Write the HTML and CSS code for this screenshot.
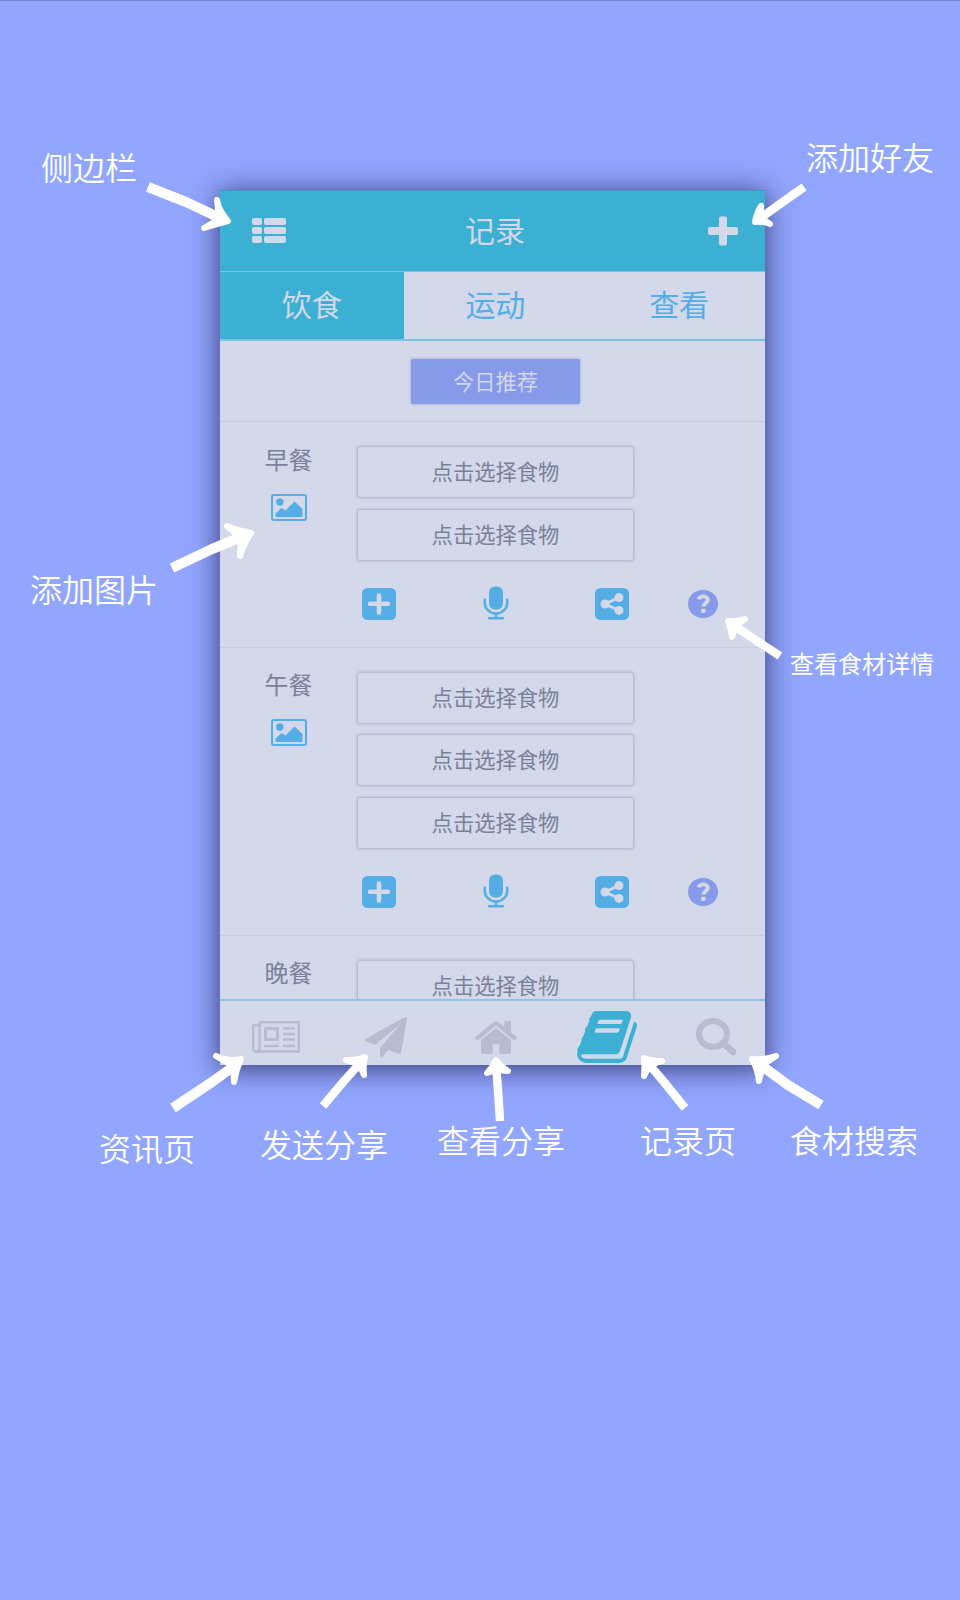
FILE: index.html
```html
<!DOCTYPE html>
<html lang="zh-CN">
<head>
<meta charset="utf-8">
<title>记录</title>
<link rel="stylesheet" href="styles.css">
</head>
<body>
<svg class="defs" width="0" height="0">
  <symbol id="picture" viewBox="0 0 36 27"><rect x="1" y="1" width="34" height="25" rx="2" fill="none" stroke="currentColor" stroke-width="2"/><circle cx="8.800" cy="8" r="3.700"/><path d="M5 22.500v-3l5.500-5 4 2.500 9-9 7.500 7v7.500z" stroke="currentColor" stroke-linejoin="round"/></symbol>
  <symbol id="plus-square" viewBox="0 0 34 32"><rect width="34" height="32" rx="5.500"/><path class="cut" d="M17 7.500v17M8 15.800h18" stroke-width="4.600" stroke-linecap="round"/></symbol>
  <symbol id="mic" viewBox="0 0 26 34"><rect x="6" y="0.500" width="14" height="23" rx="6"/><path d="M1.800 13.500v3.500a11.200 10.500 0 0 0 22.400 0v-3.500M13 27.500v4.500M6 32.200h14" fill="none" stroke="currentColor" stroke-width="2.400" stroke-linecap="round"/></symbol>
  <symbol id="share" viewBox="0 0 34 32"><rect width="34" height="32" rx="5.500"/><path class="cut" d="M24 9.500L10 16l14 6.500" stroke-width="3"/><g class="cut-fill"><circle cx="10" cy="16" r="4.500"/><circle cx="24" cy="9.600" r="4.500"/><circle cx="24" cy="22.400" r="4.500"/></g></symbol>
  <symbol id="question" viewBox="0 0 30 28"><ellipse cx="15" cy="14" rx="15" ry="14"/><path class="cut" d="M10.300 9.300c1.200-2 2.800-2.900 4.900-2.900 2.700 0 4.700 1.500 4.700 3.700 0 3.100-4.600 3-4.600 6.600" stroke-width="3.900"/><rect class="cut-fill" x="13.100" y="18.700" width="4.400" height="4.200" rx="0.800"/></symbol>
</svg>
<main class="guide">
  <section class="phone">
    <div class="screen">
      <header class="header">
        <svg class="icon-list" viewBox="0 0 34 25"><rect width="10" height="7" rx="2"/><rect x="12" width="22" height="7" rx="2"/><rect y="9" width="10" height="7" rx="2"/><rect x="12" y="9" width="22" height="7" rx="2"/><rect y="18" width="10" height="7" rx="2"/><rect x="12" y="18" width="22" height="7" rx="2"/></svg>
        <h1 class="title">记录</h1>
        <svg class="icon-add" viewBox="0 0 30 30"><rect x="11" y="0.500" width="8" height="29" rx="2"/><rect x="0" y="11" width="30" height="8" rx="2"/></svg>
      </header>
      <nav class="tabs">
        <a class="tab active">饮食</a><a class="tab">运动</a><a class="tab">查看</a>
      </nav>
      <div class="content">
        <div class="recommend"><button class="today">今日推荐</button></div>
        <section class="meal">
          <div class="meal-name"><span>早餐</span><svg class="picture"><use href="#picture"/></svg></div>
          <div class="fields"><div class="field">点击选择食物</div><div class="field">点击选择食物</div></div>
          <div class="actions"><svg class="square"><use href="#plus-square"/></svg><svg class="mic"><use href="#mic"/></svg><svg class="square"><use href="#share"/></svg></div>
          <div class="help"><svg><use href="#question"/></svg></div>
        </section>
        <section class="meal">
          <div class="meal-name"><span>午餐</span><svg class="picture"><use href="#picture"/></svg></div>
          <div class="fields"><div class="field">点击选择食物</div><div class="field">点击选择食物</div><div class="field">点击选择食物</div></div>
          <div class="actions"><svg class="square"><use href="#plus-square"/></svg><svg class="mic"><use href="#mic"/></svg><svg class="square"><use href="#share"/></svg></div>
          <div class="help"><svg><use href="#question"/></svg></div>
        </section>
        <section class="meal">
          <div class="meal-name"><span>晚餐</span></div>
          <div class="fields"><div class="field">点击选择食物</div></div>
        </section>
      </div>
      <nav class="bottom">
        <a><svg width="48" height="32" viewBox="0 0 48 32" fill="none" stroke="currentColor" stroke-width="2.400"><path d="M7.500 1.200H46.800V30.500H4q-2.800 0-2.800-2.500V4.500h6.300M7.500 1.200V28q0 2.500-2.500 2.500"/><rect x="13.500" y="7.500" width="12" height="11" stroke-width="3"/><path d="M31 7.500h12M31 13h12M31 18.500h12M12 25h14.500M31 25h12"/></svg></a>
        <a><svg width="42" height="40" viewBox="0 0 1792 1792" preserveAspectRatio="none"><path d="M1764 11q33 24 27 64l-256 1536q-5 29-32 45-14 8-31 8-11 0-24-5l-453-185-242 295q-18 23-49 23-13 0-22-4-19-7-30.500-23.500t-11.500-36.500v-349l864-1059-1069 925-395-162q-37-14-40-55-2-40 32-59l1664-960q15-9 32-9 20 0 36 11z"/></svg></a>
        <a><svg width="42" height="33" viewBox="89 253 1614 1283" preserveAspectRatio="none"><path d="M1472 992v480q0 26-19 45t-45 19h-384v-384h-256v384h-384q-26 0-45-19t-19-45v-480q0-1 .5-3t.5-3l575-474 575 474q1 2 1 6zm223-69l-62 74q-8 9-21 11h-3q-13 0-21-7l-692-577-692 577q-12 8-24 7-13-2-21-11l-62-74q-8-10-7-23.500t11-21.500l719-599q32-26 76-26t76 26l244 204v-195q0-14 9-23t23-9h192q14 0 23 9t9 23v408l219 182q10 8 11 21.500t-7 23.500z"/></svg></a>
        <a class="current"><svg width="60" height="52" viewBox="62 128 1670 1536" preserveAspectRatio="none"><path d="M1703 478q40 57 18 129l-275 906q-19 64-76.500 107.500t-122.500 43.500h-923q-77 0-148.500-53.500t-99.500-131.500q-24-67-2-127 0-4 3-27t4-37q1-8-3-21.500t-3-19.500q2-11 8-21t16.500-23.500 16.500-23.500q23-38 45-91.500t30-91.500q3-10 .5-30t-.5-28q3-11 17-28t17-23q21-36 42-92t25-90q1-9-2.500-32t.5-28q4-13 22-30.500t22-22.500q19-26 42.500-84.500t27.500-96.500q1-8-3-25.500t-2-26.500q2-8 9-18t18-23 17-21q8-12 16.500-30.500t15-35 16-36 19.500-32 26.500-23.500 36-11.500 47.500 5.500l-1 3q38-9 51-9h761q74 0 114 56t18 130l-274 906q-36 119-71.500 153.500t-128.500 34.500h-869q-27 0-38 15-11 16-1 43 24 70 144 70h923q29 0 56-15.500t35-41.500l300-987q7-22 5-57 38 15 59 43zm-1064 2q-4 13 2 22.500t20 9.500h608q13 0 25.500-9.500t16.500-22.500l21-64q4-13-2-22.500t-20-9.500h-608q-13 0-25.500 9.500t-16.500 22.500zm-83 256q-4 13 2 22.500t20 9.500h608q13 0 25.500-9.500t16.500-22.500l21-64q4-13-2-22.500t-20-9.500h-608q-13 0-25.500 9.500t-16.500 22.500z"/></svg></a>
        <a><svg width="41" height="38" viewBox="0 0 41 38" fill="none" stroke="currentColor"><ellipse cx="17" cy="16" rx="14" ry="13" stroke-width="6"/><path d="M27 25l10 9" stroke-width="6.500" stroke-linecap="round"/></svg></a>
      </nav>
    </div>
  </section>

  <svg class="arrows" viewBox="0 0 960 1600">
    <g class="wide">
      <path d="M148 187L186 202 222 219"/>
      <path d="M172 568L212 549 244 536"/>
      <path d="M173 1108L212 1082 237 1064"/>
      <path d="M821 1105L788 1085 758 1063"/>
    </g>
    <g class="narrow">
      <path d="M804 187L780 204 758 220"/>
      <path d="M780 656L757 641 733 625"/>
      <path d="M323 1106L344 1081 362 1061"/>
      <path d="M500 1121L498 1090 496 1065"/>
      <path d="M685 1108L664 1082 647 1062"/>
    </g>
    <g class="heads">
      <path d="M217 200Q219 211 228 221 216 224 204 228L219 219Z"/>
      <path d="M761 206Q756 214 755 222 764 221 770 224L761 218Z"/>
      <path d="M227 526Q239 531 251 533 243 545 240 556L241 538Z"/>
      <path d="M745 619Q736 622 728 621 731 629 732 637L736 626Z"/>
      <path d="M216 1056Q227 1062 241 1059 236 1070 234 1082L233 1066Z"/>
      <path d="M346 1060Q356 1061 365 1057 363 1067 364 1075L359 1064Z"/>
      <path d="M487 1073Q493 1067 496 1060 501 1067 508 1071L496 1070Z"/>
      <path d="M662 1061Q652 1061 644 1058 645 1067 644 1076L650 1065Z"/>
      <path d="M776 1056Q764 1060 752 1059 758 1070 759 1081L763 1065Z"/>
    </g>
  </svg>
  <span class="label sidebar">侧边栏</span>
  <span class="label friend">添加好友</span>
  <span class="label photo">添加图片</span>
  <span class="label detail">查看食材详情</span>
  <span class="label news">资讯页</span>
  <span class="label send">发送分享</span>
  <span class="label view">查看分享</span>
  <span class="label record">记录页</span>
  <span class="label search">食材搜索</span>
</main>
</body>
</html>
```
FILE: styles.css
```css
* { box-sizing: border-box; }
body { margin: 0; background: #92a6ff; font-family: "Noto Sans CJK SC", sans-serif; }
.defs { position: absolute; }
.guide { position: relative; height: 1600px; padding: 189px 0 0 220px; overflow: hidden; border-top: 1px solid #7184cc; }
.phone { width: 545px; height: 875px; overflow: hidden; background: #d3d8ea; box-shadow: 0 3px 26px 1px rgba(35, 32, 85, .8); }
.screen { width: 551px; height: 875px; display: flex; flex-direction: column; }
.header { height: 82px; flex: none; display: flex; align-items: center; justify-content: space-between; padding: 0 33px 0 32px; background: #3bb0d2; border-top: 1px solid #2f9fc0; border-bottom: 1px solid #76c6df; color: #d3d8ea; }
.header svg { fill: #d3d8ea; }
.icon-list { width: 34px; height: 25px; margin-bottom: 2px; }
.icon-add { width: 30px; height: 30px; }
.title { margin: 0 4px 4px 0; font-size: 30px; line-height: 40px; font-weight: 400; }
.tabs { height: 69px; flex: none; display: grid; grid-template-columns: 183.500px 1fr 1fr; border-bottom: 2px solid #7dc4de; }
.tab { display: flex; align-items: center; justify-content: center; font-size: 30px; line-height: 40px; color: #54aee5; padding-bottom: 5px; }
.tab.active { background: #3bb0d2; color: #d3d8ea; }
.content { height: 658px; flex: none; overflow: hidden; }
.recommend { height: 81px; display: flex; justify-content: center; align-items: flex-start; padding-top: 18px; border-bottom: 1px solid #c5c9dc; }
.today { width: 169px; height: 45px; padding: 0 0 2px; border: 0; border-radius: 2px; background: #8799e9; color: #d3d8ea; font: 21.300px/43px "Noto Sans CJK SC", sans-serif; box-shadow: 0 0 3px rgba(120, 130, 195, .6); }
.meal { display: grid; grid-template-columns: 137px 277px 137px; padding-top: 25px; border-bottom: 1px solid #c9cde0; color: #7c819a; }
.meal-name { display: flex; flex-direction: column; align-items: center; font-size: 24px; line-height: 24px; }
.meal + .meal .meal-name { margin-top: -1px; }
.picture { width: 36px; height: 27px; margin-top: 23px; color: #54aee5; fill: currentColor; }
.fields { display: flex; flex-direction: column; gap: 12.500px; }
.field { height: 50px; margin: 0 1px; border-radius: 2px; box-shadow: 0 0 3px 1px rgba(110, 115, 150, .4); background: #d3d8ea; font-size: 21.300px; line-height: 48px; text-align: center; }
.meal + .meal .field { line-height: 47px; }
.actions { grid-column: 2; display: flex; justify-content: space-between; align-items: center; height: 34px; margin: 27px 5px 26px; color: #54aee5; }
.actions svg, .help svg { fill: currentColor; }
.square { width: 34px; height: 32px; }
.mic { width: 26px; height: 34px; margin-bottom: 2px; flex: none; }
.help { display: flex; justify-content: center; align-items: center; height: 34px; margin-top: 27px; color: #8799e9; }
.help svg { width: 30px; height: 28px; }
.cut { fill: none; stroke: #d3d8ea; }
.cut-fill { fill: #d3d8ea; }
.bottom { flex: 1; display: grid; grid-template-columns: repeat(5, 1fr); border-top: 2px solid #8dc7de; color: #b8bcd1; }
.bottom a { display: flex; align-items: center; justify-content: center; padding: 8px 0 0 1px; }
.bottom svg:not([fill]) { fill: currentColor; }
.bottom .current { color: #3bb0d2; padding-left: 2px; }
.arrows { position: absolute; left: 0; top: -1px; width: 960px; height: 1600px; fill: none; stroke: #fff; stroke-linejoin: round; }
.wide { stroke-width: 10; }
.narrow { stroke-width: 8.500; }
.heads { fill: #fff; stroke-width: 6; }
.label { position: absolute; color: #fff; font-size: 32px; line-height: 40px; font-weight: 350; white-space: nowrap; }
.sidebar { left: 41px; top: 145px; }
.friend { left: 806px; top: 135px; }
.photo { left: 30px; top: 567px; }
.detail { left: 790px; top: 642px; font-size: 24px; font-weight: 400; }
.news { left: 99px; top: 1126px; }
.send { left: 260px; top: 1122px; }
.view { left: 437px; top: 1118px; }
.record { left: 640px; top: 1118px; }
.search { left: 790px; top: 1118px; }
```
